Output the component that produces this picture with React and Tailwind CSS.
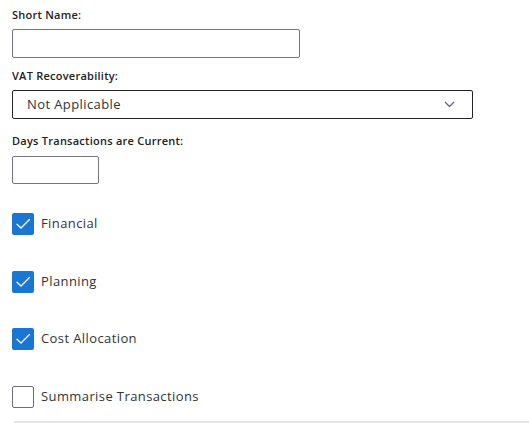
import React from 'react';

const Check = ({ checked, label }) => (
  <label className="flex items-center h-[22px]">
    {checked ? (
      <span className="w-[22px] h-[22px] rounded-[2px] bg-[#1976d2] flex items-center justify-center">
        <svg width="16" height="12" viewBox="0 0 16 12" fill="none">
          <path d="M2 6.2 L6 10 L14.5 1.5" stroke="#ffffff" strokeWidth="1.3" strokeLinecap="round" strokeLinejoin="round" />
        </svg>
      </span>
    ) : (
      <span className="w-[22px] h-[22px] rounded-[2px] border border-[#6f6a7c] bg-white" />
    )}
    <span className="ml-[7px] text-[13px] tracking-[0.4px] text-[#333]">{label}</span>
  </label>
);

export default function App() {
  return (
    <div className="w-[529px] h-[423px] bg-white font-['Open_Sans',sans-serif] text-[#222] overflow-hidden">
      <div className="pl-[12px] pt-[8px]">
        <div className="text-[11px] leading-[14px] font-semibold tracking-[0.25px]">Short Name:</div>
        <div className="mt-[7px] w-[288px] h-[29px] border border-[#77727f] rounded-[2px]" />

        <div className="mt-[11px] text-[11px] leading-[14px] font-semibold tracking-[0.25px]">VAT Recoverability:</div>
        <div className="mt-[7px] w-[461px] h-[29px] border border-[#222] rounded-[2px] flex items-center justify-between pl-[14px] pr-[17px]">
          <span className="text-[13px] tracking-[0.4px] text-[#333]">Not Applicable</span>
          <svg width="11" height="7" viewBox="0 0 11 7" fill="none">
            <path d="M1 1 L5.5 5.5 L10 1" stroke="#6b6780" strokeWidth="1.3" />
          </svg>
        </div>

        <div className="mt-[15px] text-[11px] leading-[14px] font-semibold tracking-[0.25px]">Days Transactions are Current:</div>
        <div className="mt-[8px] w-[87px] h-[28px] border border-[#77727f] rounded-[2px]" />

        <div className="mt-[29px] flex flex-col gap-[35.6px]">
          <Check checked label="Financial" />
          <Check checked label="Planning" />
          <Check checked label="Cost Allocation" />
          <Check label="Summarise Transactions" />
        </div>
      </div>
      <div className="mt-[13px] ml-[14px] h-[2px] bg-[#e4e4e4]" />
    </div>
  );
}
